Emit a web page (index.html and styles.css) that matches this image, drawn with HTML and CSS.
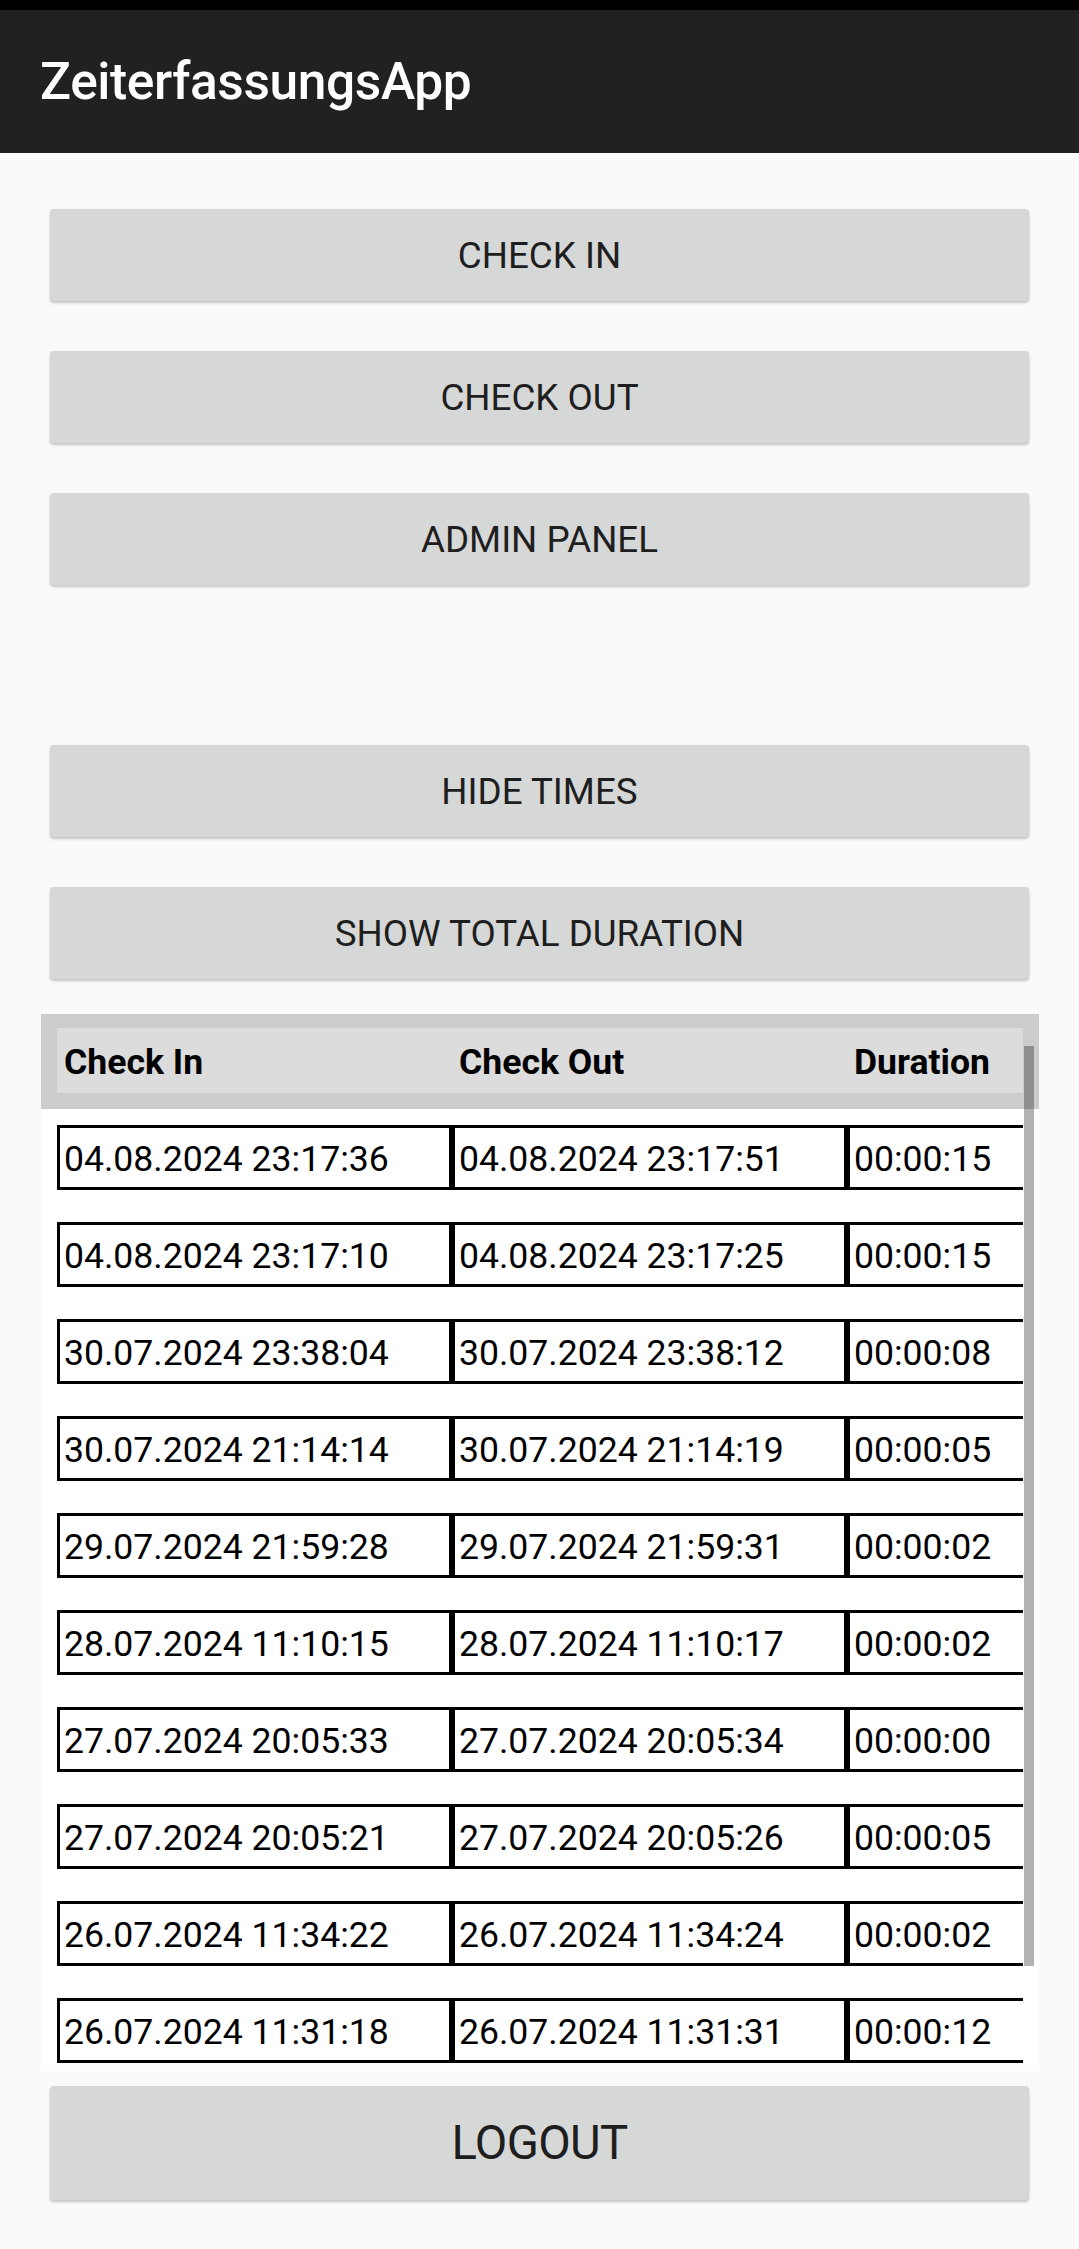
FILE: index.html
```html
<!DOCTYPE html>
<html lang="de">
<head>
<meta charset="utf-8">
<title>ZeiterfassungsApp</title>
<link rel="stylesheet" href="styles.css">
</head>
<body>
<div class="statusbar"></div>
<header class="appbar"><h1 class="title">ZeiterfassungsApp</h1></header>
<main class="content">
  <button class="btn btn-first">CHECK IN</button>
  <button class="btn">CHECK OUT</button>
  <button class="btn">ADMIN PANEL</button>
  <button class="btn btn-spaced">HIDE TIMES</button>
  <button class="btn">SHOW TOTAL DURATION</button>

  <section class="table-wrap">
    <div class="table-head">
      <div class="head-row">
        <div class="hcell">Check In</div>
        <div class="hcell">Check Out</div>
        <div class="hcell">Duration</div>
      </div>
    </div>
    <div class="table-body">
      <div class="rows">
        <div class="row"><div class="cell">04.08.2024 23:17:36</div><div class="cell">04.08.2024 23:17:51</div><div class="cell">00:00:15</div></div>
        <div class="row"><div class="cell">04.08.2024 23:17:10</div><div class="cell">04.08.2024 23:17:25</div><div class="cell">00:00:15</div></div>
        <div class="row"><div class="cell">30.07.2024 23:38:04</div><div class="cell">30.07.2024 23:38:12</div><div class="cell">00:00:08</div></div>
        <div class="row"><div class="cell">30.07.2024 21:14:14</div><div class="cell">30.07.2024 21:14:19</div><div class="cell">00:00:05</div></div>
        <div class="row"><div class="cell">29.07.2024 21:59:28</div><div class="cell">29.07.2024 21:59:31</div><div class="cell">00:00:02</div></div>
        <div class="row"><div class="cell">28.07.2024 11:10:15</div><div class="cell">28.07.2024 11:10:17</div><div class="cell">00:00:02</div></div>
        <div class="row"><div class="cell">27.07.2024 20:05:33</div><div class="cell">27.07.2024 20:05:34</div><div class="cell">00:00:00</div></div>
        <div class="row"><div class="cell">27.07.2024 20:05:21</div><div class="cell">27.07.2024 20:05:26</div><div class="cell">00:00:05</div></div>
        <div class="row"><div class="cell">26.07.2024 11:34:22</div><div class="cell">26.07.2024 11:34:24</div><div class="cell">00:00:02</div></div>
        <div class="row"><div class="cell">26.07.2024 11:31:18</div><div class="cell">26.07.2024 11:31:31</div><div class="cell">00:00:12</div></div>
      </div>
    </div>
    <div class="scrollbar"></div>
  </section>

  <button class="btn btn-logout">LOGOUT</button>
</main>
</body>
</html>
```

FILE: styles.css
```css
html, body {
  margin: 0;
  padding: 0;
}
body {
  background: #fafafa;
  font-family: Roboto, "Noto Sans", "Liberation Sans", sans-serif;
  width: 1079px;
  min-height: 2249px;
}
.statusbar {
  height: 10px;
  background: #000;
}
.appbar {
  height: 143px;
  background: #212121;
  display: flex;
  align-items: center;
  padding-left: 40px;
}
.title {
  margin: 0;
  color: #fff;
  font-size: 51.5px;
  font-weight: 500;
  letter-spacing: -0.4px;
}
.content {
  display: flex;
  flex-direction: column;
  padding: 0 40px 0 41px;
}
.btn {
  display: flex;
  align-items: center;
  justify-content: center;
  height: 92px;
  margin: 50px 10px 0 9px;
  padding: 0;
  border: none;
  border-radius: 4px;
  background: #d6d7d7;
  box-shadow: 0 2px 3px rgba(0, 0, 0, 0.22), 0 0 1px rgba(0, 0, 0, 0.08);
  color: #1e1e1e;
  font-family: Roboto, "Noto Sans", sans-serif;
  font-size: 36.75px;
  font-weight: 400;
  letter-spacing: 0;
}
.btn-first {
  margin-top: 56px;
}
.btn-spaced {
  margin-top: 160px;
}
.btn-logout {
  height: 114px;
  margin-top: 15px;
  font-size: 47.25px;
  letter-spacing: -0.7px;
}
.table-wrap {
  position: relative;
  margin-top: 35px;
  background: #fff;
}
.table-head {
  background: #cccccc;
  padding: 14px 16px 16px 16px;
}
.head-row {
  display: flex;
  height: 65px;
  background: #dcdcdc;
  overflow: hidden;
}
.hcell {
  flex: 0 0 395px;
  box-sizing: border-box;
  padding-left: 7px;
  display: flex;
  align-items: center;
  font-size: 35.6px;
  font-weight: 700;
  color: #000;
  padding-top: 3px;
}
.table-body {
  padding: 16px 16px 8px 16px;
}
.rows {
  display: flex;
  flex-direction: column;
  gap: 32px;
  overflow: hidden;
}
.row {
  display: flex;
  height: 65px;
}
.cell {
  flex: 0 0 395px;
  box-sizing: border-box;
  border: 3px solid #000;
  padding-left: 4px;
  display: flex;
  align-items: center;
  font-size: 35.6px;
  color: #000;
  padding-top: 2px;
}
.scrollbar {
  position: absolute;
  right: 5px;
  top: 32px;
  width: 10px;
  height: 920px;
  background: rgba(0, 0, 0, 0.3);
}
```
